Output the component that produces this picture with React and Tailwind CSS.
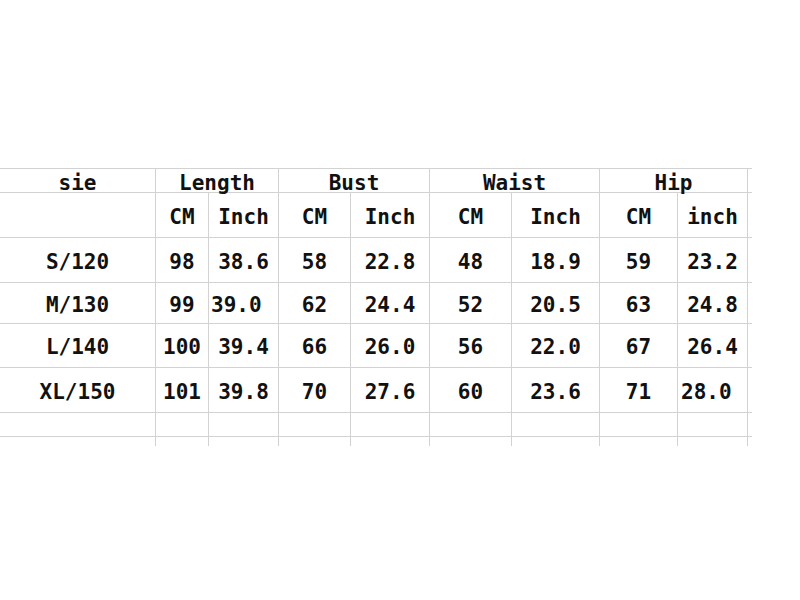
const line = "border-[#d2d2d2]";

const groups = ["Length", "Bust", "Waist", "Hip"];
const units = ["CM", "Inch", "CM", "Inch", "CM", "Inch", "CM", "inch"];

const rows = [
  { size: "S/120", values: ["98", "38.6", "58", "22.8", "48", "18.9", "59", "23.2"] },
  { size: "M/130", values: ["99", "39.0", "62", "24.4", "52", "20.5", "63", "24.8"] },
  { size: "L/140", values: ["100", "39.4", "66", "26.0", "56", "22.0", "67", "26.4"] },
  { size: "XL/150", values: ["101", "39.8", "70", "27.6", "60", "23.6", "71", "28.0"] },
];

// cells that sit off-centre in the original chart
const leftAligned = {
  "M/130-1": "justify-start pl-[2px]",
  "XL/150-7": "justify-start pl-[3px]",
};

function Cell({ children, className = "" }) {
  return (
    <div className={`flex items-center border-b border-r ${line} leading-none ${className}`}>
      {children}
    </div>
  );
}

function Spacer({ bottom = true }) {
  return <div className={bottom ? `border-b ${line}` : ""} />;
}

export default function App() {
  return (
    <div className="min-h-[600px] w-[800px] bg-white pt-[168px] font-['DejaVu_Sans_Mono',monospace] text-[21px] font-bold text-[#111]">
      <div
        className={`grid w-[752px] border-t ${line} grid-cols-[156px_53px_70px_72px_79px_82px_88px_78px_70px_4px] grid-rows-[24px_45px_45px_41px_44px_45px_24px_9px]`}
      >
        {/* group header */}
        <Cell className="justify-center pt-[5px]">sie</Cell>
        {groups.map((g) => (
          <Cell key={g} className="col-span-2 justify-center pt-[5px]">
            {g}
          </Cell>
        ))}
        <Spacer />

        {/* unit header */}
        <Cell />
        {units.map((u, i) => (
          <Cell key={i} className="justify-center pt-[5px]">
            {u}
          </Cell>
        ))}
        <Spacer />

        {rows.map((row) => (
          <div key={row.size} className="contents">
            <Cell className="justify-center pt-[4px]">{row.size}</Cell>
            {row.values.map((v, i) => (
              <Cell
                key={i}
                className={`pt-[4px] ${leftAligned[`${row.size}-${i}`] || "justify-center"}`}
              >
                {v}
              </Cell>
            ))}
            <Spacer />
          </div>
        ))}

        {/* empty row */}
        {Array.from({ length: 9 }).map((_, i) => (
          <Cell key={`e${i}`} />
        ))}
        <Spacer />

        {/* line stubs below the table */}
        {Array.from({ length: 9 }).map((_, i) => (
          <div key={`t${i}`} className={`border-r ${line}`} />
        ))}
        <Spacer bottom={false} />
      </div>
    </div>
  );
}
